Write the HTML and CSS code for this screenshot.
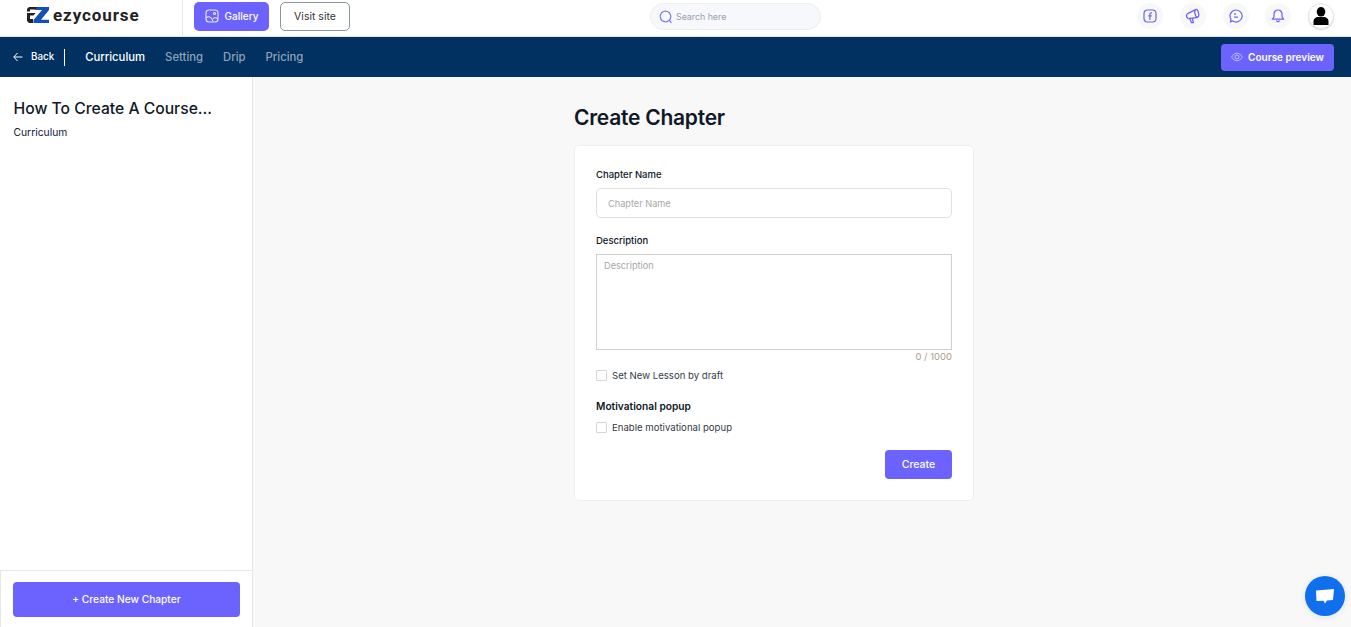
FILE: index.html
```html
<!DOCTYPE html>
<html lang="en">
<head>
    <meta charset="UTF-8">
    <meta name="viewport" content="width=device-width, initial-scale=1.0">
    <title>Create Chapter</title>
    <link rel="stylesheet" href="styles.css">
</head>
<body>
    <header class="topbar">
        <div class="logo">
            <svg class="logo-mark" width="22" height="16" viewBox="0 0 22 16">
                <path d="M2 0H11L9 2.500H3V4.500H0V2Z" fill="#222"/>
                <path d="M0 6H8.500L6.500 8.500H3V12H6V16H2L0 14Z" fill="#222"/>
                <path d="M10 0H22V3L14 12.800H22V16H6.500V13L15 3H8Z" fill="#1450b8"/>
            </svg>
            <span class="logo-text">ezycourse</span>
        </div>
        <button class="btn btn-gallery">
            <svg width="14" height="14" viewBox="0 0 14 14" fill="none" stroke="#e8e6ff" stroke-width="1.100">
                <rect x="1" y="1" width="12" height="12" rx="3"/>
                <circle cx="9.500" cy="4.500" r="1"/>
                <path d="M1 9C3 7 5 7.500 7 10L8 12.500M8 9.500C9.500 8.500 11.500 8.500 13 10"/>
            </svg>
            Gallery
        </button>
        <button class="btn btn-visit">Visit site</button>
        <div class="search">
            <svg width="14" height="14" viewBox="0 0 14 14" fill="none" stroke="#7f78f5" stroke-width="1.200">
                <circle cx="6.500" cy="6.500" r="5.300"/>
                <path d="M10.500 10.500L12.500 12.800"/>
            </svg>
            <span>Search here</span>
        </div>
        <div class="top-icons">
            <span class="round-icon">
                <svg width="14" height="14" viewBox="0 0 14 14" fill="none" stroke="#6c63f5" stroke-width="1.200">
                    <rect x="1" y="1" width="12" height="12" rx="3.500"/>
                    <path d="M9 3.800H8.200C7.300 3.800 6.900 4.300 6.900 5.200V11M5.300 6.800H8.800"/>
                </svg>
            </span>
            <span class="round-icon">
                <svg width="15" height="16" viewBox="0 0 14 15" fill="none" stroke="#6c63f5" stroke-width="1.200">
                    <path d="M2 5.500L9.800 1.500M3.200 10L12 8.700"/>
                    <ellipse cx="11" cy="5" rx="1.700" ry="3.700" transform="rotate(-12 11 5)"/>
                    <path d="M2 5.500C0.800 6.800 1.300 9.300 3.200 10"/>
                    <path d="M4.500 10L6 13.800H7.800L6.900 9.500"/>
                </svg>
            </span>
            <span class="round-icon">
                <svg width="14" height="14" viewBox="0 0 14 14" fill="none" stroke="#6c63f5" stroke-width="1.200">
                    <path d="M7 1A6 6 0 1 1 3.800 12L1.500 12.800L2 10.200A6 6 0 0 1 7 1Z"/>
                    <path d="M5 5.200H7M5 8.200H9"/>
                </svg>
            </span>
            <span class="round-icon">
                <svg width="14" height="14" viewBox="0 0 14 14" fill="none" stroke="#6c63f5" stroke-width="1.200">
                    <path d="M7 1C4.500 1 3 3 3 5.200V7.500L1.500 10.200H12.500L11 7.500V5.200C11 3 9.500 1 7 1Z"/>
                    <path d="M5.500 11.500C6 13 8 13 8.500 11.500"/>
                </svg>
            </span>
            <span class="round-icon avatar">
                <svg width="16" height="18" viewBox="0 0 16 18" fill="#000">
                    <ellipse cx="8" cy="4.800" rx="4.300" ry="4.800"/>
                    <path d="M0.500 18V14.500C0.500 11.500 3 10 5 10H11C13 10 15.500 11.500 15.500 14.500V18Z"/>
                </svg>
            </span>
        </div>
    </header>

    <nav class="navbar">
        <a class="back">
            <svg width="10" height="10" viewBox="0 0 10 10" fill="none" stroke="#fff" stroke-width="1">
                <path d="M9.500 5H0.800M4.500 1L0.800 5L4.500 9"/>
            </svg>
            Back
        </a>
        <span class="nav-divider"></span>
        <a class="nav-link active">Curriculum</a>
        <a class="nav-link">Setting</a>
        <a class="nav-link">Drip</a>
        <a class="nav-link">Pricing</a>
        <button class="btn btn-preview">
            <svg width="12" height="10" viewBox="0 0 12 10" fill="none" stroke="#c9c6ff" stroke-width="0.900">
                <path d="M0.600 5C2 2.400 4 1.300 6 1.300C8 1.300 10 2.400 11.400 5C10 7.600 8 8.700 6 8.700C4 8.700 2 7.600 0.600 5Z"/>
                <circle cx="6" cy="5" r="2"/>
            </svg>
            Course preview
        </button>
    </nav>

    <div class="layout">
        <aside class="sidebar">
            <div class="sidebar-top">
                <h2>How To Create A Course...</h2>
                <p>Curriculum</p>
            </div>
            <div class="sidebar-bottom">
                <button class="btn btn-new">+ Create New Chapter</button>
            </div>
        </aside>
        <main class="content">
            <h1>Create Chapter</h1>
            <form class="card">
                <label class="field-label">Chapter Name</label>
                <input class="input" type="text" placeholder="Chapter Name">
                <label class="field-label desc-label">Description</label>
                <textarea class="textarea" placeholder="Description"></textarea>
                <div class="counter">0 / 1000</div>
                <label class="check">
                    <span class="box"></span>
                    Set New Lesson by draft
                </label>
                <div class="popup-title">Motivational popup</div>
                <label class="check">
                    <span class="box"></span>
                    Enable motivational popup
                </label>
                <div class="actions">
                    <button type="button" class="btn btn-create">Create</button>
                </div>
            </form>
        </main>
    </div>

    <div class="chat">
        <svg width="20" height="17" viewBox="0 0 20 17" fill="#fff">
            <path d="M1 2.500L19 1L18 12L12 12.500L10 15.500L8.500 12.800L1.500 13Z"/>
        </svg>
    </div>
</body>
</html>
```

FILE: styles.css
```css
* {
    box-sizing: border-box;
}
body {
    margin: 0;
    height: 627px;
    overflow: hidden;
    display: flex;
    flex-direction: column;
    font-family: Inter, "Noto Sans", sans-serif;
    color: #101828;
    background: #f8f8f8;
}
.btn {
    border: none;
    font-family: inherit;
    cursor: pointer;
    display: flex;
    align-items: center;
    justify-content: center;
}

/* top white bar */
.topbar {
    height: 37px;
    flex: none;
    display: flex;
    align-items: flex-start;
    background: #fff;
    border-bottom: 1px solid #e4e4e4;
}
.logo {
    width: 183px;
    height: 36px;
    padding: 7px 0 0 27px;
    display: flex;
    align-items: flex-start;
    gap: 4px;
    border-right: 1px solid #e8e8e8;
}
.logo-text {
    font-size: 17px;
    font-weight: 700;
    line-height: 16px;
    letter-spacing: 0.900px;
    color: #222;
    font-family: Roboto, sans-serif;
}
.btn-gallery {
    width: 75px;
    height: 29px;
    margin: 2px 0 0 11px;
    padding-bottom: 2px;
    gap: 6px;
    border-radius: 5px;
    background: #6c63ff;
    color: #fff;
    font-size: 10px;
    font-weight: 500;
}
.btn-visit {
    width: 70px;
    height: 29px;
    margin: 2px 0 0 11px;
    background: #fff;
    border: 1px solid #8a94a6;
    border-radius: 5px;
    color: #333;
    font-size: 10.500px;
}
.search {
    width: 171px;
    height: 27px;
    margin: 3px 0 0 300px;
    padding-left: 8px;
    display: flex;
    align-items: center;
    gap: 3px;
    background: #f7f8fb;
    border: 1px solid #ececf1;
    border-radius: 14px;
    font-size: 8.800px;
    color: #98a0ad;
}
.top-icons {
    margin: 3px 17px 0 auto;
    display: flex;
    gap: 16.750px;
}
.round-icon {
    width: 26px;
    height: 26px;
    border-radius: 50%;
    background: #f8f8fb;
    display: flex;
    align-items: center;
    justify-content: center;
}
.avatar {
    background: #fff;
    border: 1px solid #e6e6e6;
    box-shadow: 0 1px 1px rgba(0, 0, 0, 0.15);
}

/* dark nav */
.navbar {
    height: 40px;
    flex: none;
    display: flex;
    align-items: center;
    padding: 0 17px 0 13px;
    background: #003161;
}
.back {
    display: flex;
    align-items: center;
    gap: 8px;
    margin-top: -1px;
    color: #fff;
    font-size: 9.800px;
    font-weight: 500;
}
.nav-divider {
    width: 1px;
    height: 17px;
    margin: 0 20px 0 10px;
    background: #fff;
}
.nav-link {
    margin-right: 20px;
    font-size: 11.300px;
    font-weight: 500;
    color: #8fa3b8;
}
.nav-link.active {
    color: #fff;
}
.btn-preview {
    width: 113px;
    height: 27px;
    margin-left: auto;
    padding-bottom: 1px;
    gap: 5px;
    border-radius: 4px;
    background: #6c63ff;
    color: #fff;
    font-size: 10px;
    font-weight: 600;
}

/* sidebar + main */
.layout {
    flex: 1;
    display: flex;
    min-height: 0;
}
.sidebar {
    width: 253px;
    flex: none;
    display: flex;
    flex-direction: column;
    background: #fff;
    border-right: 1px solid #e6e6e6;
}
.sidebar-top {
    flex: 1;
    padding: 22px 0 0 13.500px;
}
.sidebar h2 {
    margin: 0;
    font-size: 15.700px;
    line-height: 20px;
    font-weight: 500;
    white-space: nowrap;
}
.sidebar p {
    margin: 7px 0 0;
    font-size: 10.300px;
    line-height: 13px;
    color: #101840;
}
.sidebar-bottom {
    height: 57px;
    padding: 11px 12px 0 12px;
    border-top: 1px solid #e6e6e6;
    border-left: 1px solid #e6e6e6;
}
.btn-new {
    width: 227px;
    height: 35px;
    padding-bottom: 3px;
    border-radius: 4px;
    background: #6c63ff;
    color: #fff;
    font-size: 10.200px;
    font-weight: 500;
}
.content {
    flex: 1;
    padding: 27px 0 0 321px;
}
.content h1 {
    margin: 0 0 14px;
    font-size: 21px;
    line-height: 27px;
    font-weight: 600;
    letter-spacing: -0.250px;
}
.card {
    width: 400px;
    height: 356px;
    padding: 22px 21px 0 21px;
    display: flex;
    flex-direction: column;
    background: #fff;
    border: 1px solid #eeeef2;
    border-radius: 5px;
}
.field-label {
    font-size: 9.500px;
    line-height: 13px;
    font-weight: 500;
}
.input {
    height: 30px;
    margin-top: 7px;
    padding: 0 11px;
    border: 1px solid #dfdfdf;
    border-radius: 5px;
    outline: none;
    font-family: inherit;
    font-size: 9.200px;
}
.input::placeholder,
.textarea::placeholder {
    color: #a8a8a8;
    opacity: 1;
}
.desc-label {
    margin-top: 16px;
}
.textarea {
    height: 96px;
    margin-top: 7px;
    padding: 5px 7px;
    border: 1px solid #cfcfcf;
    outline: none;
    resize: none;
    font-family: inherit;
    font-size: 9.200px;
}
.counter {
    margin-top: 1px;
    text-align: right;
    font-size: 9.500px;
    line-height: 12px;
    color: #b09a8c;
}
.check {
    margin-top: 6px;
    display: flex;
    align-items: center;
    gap: 5px;
    font-size: 9.600px;
    line-height: 13px;
    color: #333b48;
}
.box {
    width: 11px;
    height: 11px;
    background: #fff;
    border: 1px solid #d6d6d6;
    border-radius: 1px;
}
.popup-title {
    margin-top: 18px;
    margin-bottom: 1.500px;
    font-size: 10.200px;
    line-height: 13px;
    font-weight: 600;
}
.actions {
    margin-top: 16.500px;
    display: flex;
    justify-content: flex-end;
}
.btn-create {
    width: 67px;
    height: 29px;
    border-radius: 4px;
    background: #6c63ff;
    color: #fff;
    font-size: 10.500px;
    font-weight: 500;
}

/* floating chat button */
.chat {
    position: fixed;
    right: 6px;
    bottom: 11px;
    width: 40px;
    height: 40px;
    border-radius: 50%;
    background: #0f6fec;
    box-shadow: 0 1px 6px rgba(0, 0, 0, 0.1);
    display: flex;
    align-items: center;
    justify-content: center;
}
```
